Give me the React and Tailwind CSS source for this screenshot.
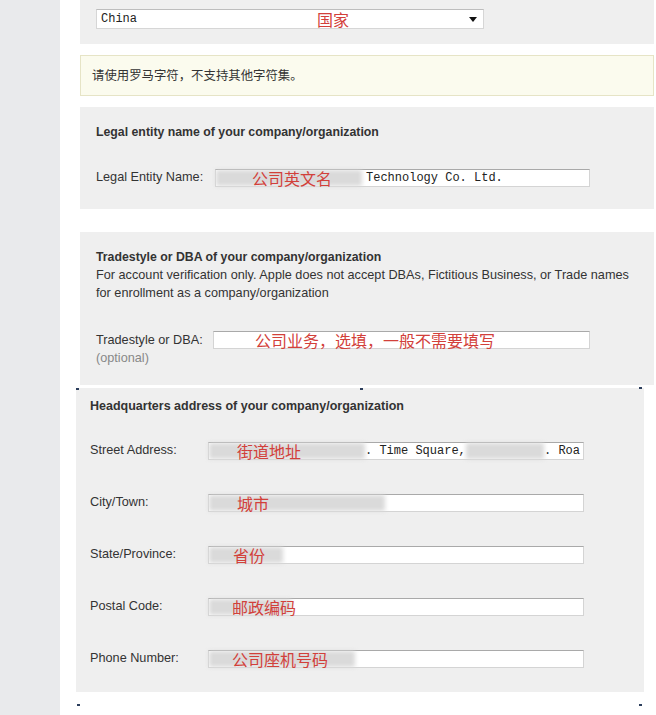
import React from "react";

const sans = "font-['Liberation_Sans','Noto_Sans_CJK_SC',sans-serif]";
const mono = "font-['Liberation_Mono',monospace] text-[12px] text-[#222] leading-[16px] whitespace-nowrap";
const red = "text-[#d2403a] font-['Noto_Sans_CJK_SC',sans-serif] text-[16px] leading-[18px]";

const Blur = ({ w }) => (
  <div className={`h-full ${w} bg-[#dadada] blur-[2px] shrink-0`} />
);

const Note = ({ children, left }) => (
  <span className={`absolute top-[-1px] ${left} ${red} whitespace-nowrap`}>
    {children}
  </span>
);

const Box = ({ children, w = "w-[376px]" }) => (
  <div
    className={`relative flex ${w} h-[18px] bg-white border border-[#d4d4d4] border-t-[#a9a9a9]`}
  >
    {children}
  </div>
);

const Row = ({ label, labelW, children }) => (
  <div className="flex items-center h-[18px]">
    <div className={`${labelW} shrink-0 text-[12.7px] text-[#333] whitespace-nowrap`}>{label}</div>
    {children}
  </div>
);

const Mark = ({ pos }) => (
  <div className={`absolute ${pos} w-[3px] h-[2px] bg-[#2c3e5c]`} />
);

const App = () => {
  return (
    <div className={`flex min-h-screen bg-white ${sans}`}>
      <div className="w-[60px] shrink-0 bg-[#e9eaec]" />

      <main className="ml-[20px] w-[574px] flex flex-col">
        {/* country */}
        <section className="h-[44px] bg-[#efefef] pl-[16px] pt-[9px]">
          <div className="relative flex items-center w-[388px] h-[20px] bg-white border border-[#d6d6d6] border-t-[#bdbdbd] pl-[4px]">
            <span className={mono}>China</span>
            <span className={`absolute left-[220px] top-0 ${red}`}>国家</span>
            <svg className="absolute right-[6px] top-[7px]" width="8" height="5" viewBox="0 0 8 5">
              <path d="M0 0 H8 L4 5 Z" fill="#111" />
            </svg>
          </div>
        </section>

        {/* notice */}
        <div className="mt-[11px] h-[41px] bg-[#fbfbee] border border-[#e6e4c6] pl-[11px] flex items-center text-[12.4px] text-[#333] font-['Noto_Sans_CJK_SC',sans-serif]">
          请使用罗马字符，不支持其他字符集。
        </div>

        {/* legal entity */}
        <section className="mt-[11px] h-[102px] bg-[#efefef] pl-[16px] pt-[17px]">
          <h3 className="text-[12.3px] font-bold text-[#333] leading-[16px]">
            Legal entity name of your company/organization
          </h3>
          <div className="mt-[29px]">
            <Row label="Legal Entity Name:" labelW="w-[119px]">
              <Box w="w-[375px]">
                <Blur w="w-[146px]" />
                <Note left="left-[36px]">公司英文名</Note>
                <span className={`${mono} pl-[4px]`}>Technology Co. Ltd.</span>
              </Box>
            </Row>
          </div>
        </section>

        {/* tradestyle */}
        <section className="mt-[23px] h-[153px] bg-[#efefef] pl-[16px] pt-[16px] text-[12.7px] leading-[18px] text-[#333]">
          <h3 className="font-bold text-[12.3px]">Tradestyle or DBA of your company/organization</h3>
          <p className="whitespace-nowrap">
            For account verification only. Apple does not accept DBAs, Fictitious Business, or Trade names
            <br />
            for enrollment as a company/organization
          </p>
          <div className="mt-[29px]">
            <Row label="Tradestyle or DBA:" labelW="w-[117px]">
              <Box w="w-[377px]">
                <Note left="left-[41px]">公司业务，选填，一般不需要填写</Note>
              </Box>
            </Row>
            <div className="text-[#888]">(optional)</div>
          </div>
        </section>

        {/* headquarters */}
        <section className="relative mt-[3px] ml-[-4px] w-[568px] h-[304px] bg-[#efefef] pl-[14px] pt-[9px] text-[#333]">
          <Mark pos="left-0 top-[0px]" />
          <Mark pos="left-[284px] top-[0px]" />
          <Mark pos="right-[2px] top-[-1px]" />
          <h3 className="font-bold text-[12.5px] leading-[18px]">Headquarters address of your company/organization</h3>
          <div className="mt-[27px] flex flex-col gap-[34px]">
            <Row label="Street Address:" labelW="w-[118px]">
              <Box>
                <Blur w="w-[156px]" />
                <Note left="left-[28px]">街道地址</Note>
                <span className={`${mono} w-[101px] shrink-0`}>. Time Square,</span>
                <Blur w="w-[78px]" />
                <span className={mono}>. Roa</span>
              </Box>
            </Row>
            <Row label="City/Town:" labelW="w-[118px]">
              <Box>
                <Blur w="w-[176px]" />
                <Note left="left-[28px]">城市</Note>
              </Box>
            </Row>
            <Row label="State/Province:" labelW="w-[118px]">
              <Box>
                <Blur w="w-[74px]" />
                <Note left="left-[24px]">省份</Note>
              </Box>
            </Row>
            <Row label="Postal Code:" labelW="w-[118px]">
              <Box>
                <Blur w="w-[82px]" />
                <Note left="left-[23px]">邮政编码</Note>
              </Box>
            </Row>
            <Row label="Phone Number:" labelW="w-[118px]">
              <Box>
                <Blur w="w-[146px]" />
                <Note left="left-[23px]">公司座机号码</Note>
              </Box>
            </Row>
          </div>
        </section>

        <div className="relative h-[20px] ml-[-4px] w-[568px]">
          <Mark pos="left-[1px] top-[12px]" />
          <Mark pos="right-[2px] top-[12px]" />
        </div>
      </main>
    </div>
  );
};

export default App;
